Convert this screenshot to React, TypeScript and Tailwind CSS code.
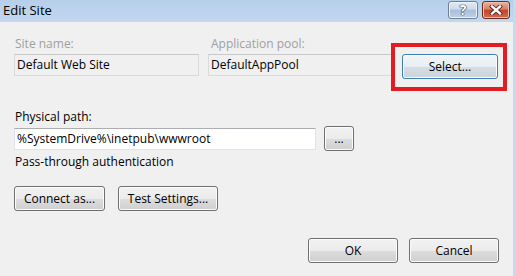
import type { ReactNode } from "react";

const font = { fontFamily: '"Segoe UI", "Open Sans", "Noto Sans", sans-serif' };

function WinButton({
  children,
  className = "",
  active = false,
}: {
  children: ReactNode;
  className?: string;
  active?: boolean;
}) {
  return (
    <button
      className={
        "h-[25px] rounded-[3px] border text-[12px] text-black flex items-center justify-center shadow-[inset_0_0_0_1px_#fcfcfc] " +
        (active
          ? "border-[#3c7fb1] bg-[linear-gradient(#f1f5f8_0%,#e8eef3_50%,#d5dde5_51%,#cbd3db_100%)] shadow-[inset_0_0_0_1px_#c0e4f8] "
          : "border-[#707070] bg-[linear-gradient(#f2f2f2_0%,#ebebeb_50%,#dddddd_51%,#cfcfcf_100%)] ") +
        className
      }
    >
      {children}
    </button>
  );
}

function TextBox({ value, disabled = false, className = "" }: { value: string; disabled?: boolean; className?: string }) {
  return (
    <div
      className={
        "h-[22px] border flex items-center px-[2px] text-[12px] text-black " +
        (disabled
          ? "bg-[#f0f0f0] border-[#dadada] border-t-[#c8c8c8] "
          : "bg-white border-[#e2e3ea] border-t-[#abadb3] ") +
        className
      }
    >
      {value}
    </div>
  );
}

export default function App() {
  return (
    <div className="w-[516px] h-[276px] flex flex-col bg-[#f0f0f0] overflow-hidden" style={font}>
      {/* Title bar */}
      <div className="h-[22px] flex items-start justify-between bg-[linear-gradient(#b6cfe9,#c3d8ef)] border-r-[3px] border-[#c5daf0]">
        <span className="pl-[3px] pt-[2px] text-[13px] leading-[17px] text-black">Edit Site</span>
        <div className="flex gap-[4px] pt-[1px] pr-[3px]">
          <div className="w-[30px] h-[18px] rounded-[3px] border border-[#6f8198] bg-[linear-gradient(#e2eaf5_0%,#ccdaec_45%,#a9bed9_50%,#bed1e8_100%)] shadow-[inset_0_0_0_1px_#eef3fa] flex items-center justify-center">
            <span className="text-[14px] leading-none font-bold text-white [text-shadow:0_0_1px_#1f2d40,0_0_1px_#1f2d40,0_0_1px_#1f2d40]">?</span>
          </div>
          <div className="w-[28px] h-[18px] rounded-[3px] border border-[#6a2a20] bg-[linear-gradient(#eab0a0_0%,#d97f66_45%,#c44327_50%,#d86a4d_100%)] shadow-[inset_0_0_0_1px_#f0c2b4] flex items-center justify-center">
            <svg width="14" height="10" viewBox="0 0 14 10">
              <path d="M3 1.5 L11 8.5 M11 1.5 L3 8.5" stroke="#4a1d14" strokeWidth="4" strokeLinecap="square" />
              <path d="M3 1.5 L11 8.5 M11 1.5 L3 8.5" stroke="#ffffff" strokeWidth="2.4" strokeLinecap="square" />
            </svg>
          </div>
        </div>
      </div>

      {/* Body */}
      <div className="flex-1 flex flex-col pl-[14px] pr-[14px] border-r-[3px] border-[#c5daf0] text-[12px] leading-[16px] text-black">
        <div className="flex items-start mt-[14px]">
          <div className="w-[185px] flex flex-col">
            <span className="pl-[1px] text-[#a0a0a0]">Site name:</span>
            <TextBox value="Default Web Site" disabled className="mt-[2px]" />
          </div>
          <div className="w-[184px] ml-[9px] flex flex-col">
            <span className="pl-[3px] text-[#a0a0a0]">Application pool:</span>
            <TextBox value="DefaultAppPool" disabled className="mt-[2px]" />
          </div>
          <div className="relative ml-[10px] mt-[18px]">
            <WinButton active className="w-[96px]">Select...</WinButton>
            <div className="absolute -left-[11px] -top-[11px] -right-[9px] -bottom-[12px] border-[4px] border-[#e31b23]" />
          </div>
        </div>

        <span className="mt-[30px] pl-[1px]">Physical path:</span>
        <div className="flex items-center mt-[1px]">
          <TextBox value="%SystemDrive%\inetpub\wwwroot" className="w-[302px]" />
          <WinButton className="w-[30px] ml-[8px] text-[10px]">...</WinButton>
        </div>

        <span className="mt-[3px] pl-[1px]">Pass-through authentication</span>

        <div className="flex gap-[13px] mt-[16px]">
          <WinButton className="w-[91px]">Connect as...</WinButton>
          <WinButton className="w-[100px]">Test Settings...</WinButton>
        </div>

        <div className="flex justify-end gap-[11px] mt-[27px]">
          <WinButton className="w-[90px]">OK</WinButton>
          <WinButton className="w-[90px]">Cancel</WinButton>
        </div>
      </div>
    </div>
  );
}
